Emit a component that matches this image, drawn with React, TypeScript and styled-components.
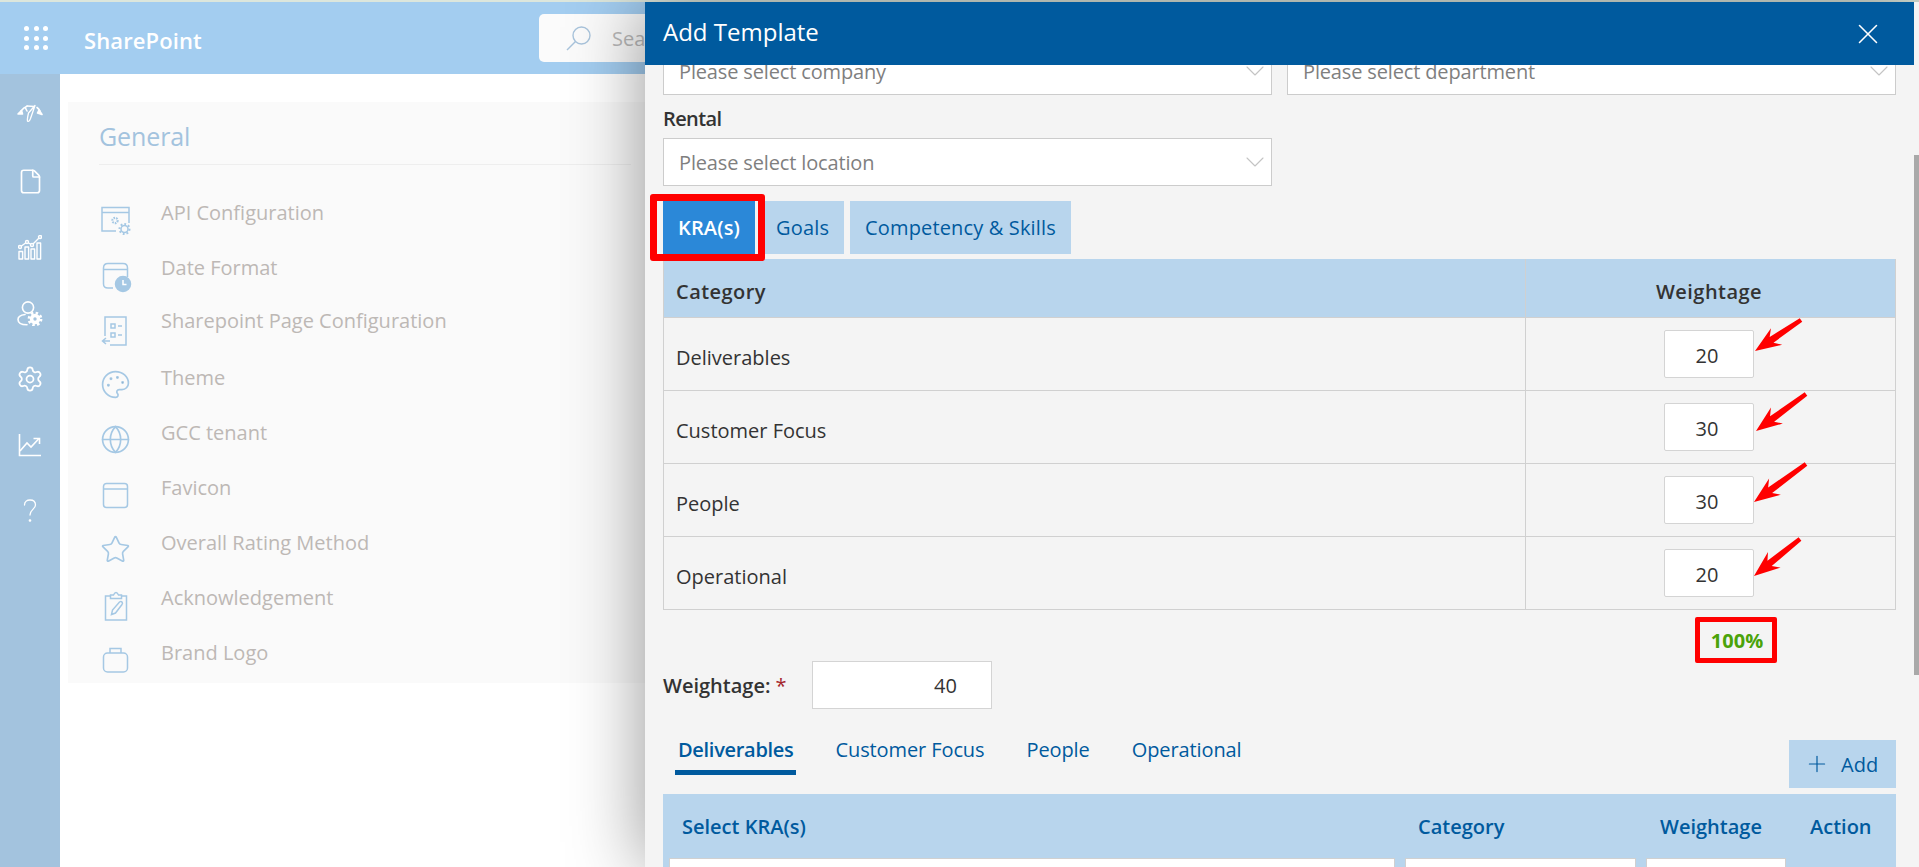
import React from "react";
import styled, { createGlobalStyle } from "styled-components";
import { ChevronDown, File, Globe, Palette, Plus, Settings, Star, X } from "lucide-react";

const Global = createGlobalStyle`
  html, body { margin: 0; padding: 0; background: #fff; }
  * { box-sizing: border-box; }
  body { font-family: "Open Sans", "Liberation Sans", sans-serif; overflow: hidden; }
`;

const Page = styled.div`
  position: relative;
  width: 1919px;
  height: 867px;
  overflow: hidden;
  display: flex;
  flex-direction: column;
  background: #fff;
`;
const TopStrip = styled.div`
  height: 2px;
  flex: none;
  background: #dce6dc;
`;
const Header = styled.header`
  height: 72px;
  flex: none;
  background: #a3cdf0;
  display: flex;
  align-items: center;
`;
const Waffle = styled.div`
  width: 24px;
  margin-left: 24px;
  display: grid;
  grid-template-columns: repeat(3, 5px);
  grid-auto-rows: 5px;
  gap: 4.5px;
  span { background: #fff; border-radius: 50%; }
`;
const Brand = styled.div`
  margin-left: 36px;
  width: 455px;
  color: #fff;
  font-size: 22px;
  font-weight: 600;
  letter-spacing: 0.1px;
  margin-top: 4px;
`;
const SearchBox = styled.div`
  width: 300px;
  height: 48px;
  background: #fbfbfb;
  border-radius: 5px;
  display: flex;
  align-items: center;
  padding-left: 27px;
  gap: 21px;
  color: #b9b9b9;
  font-size: 20px;
`;
const Main = styled.div`
  flex: 1;
  display: flex;
  min-height: 0;
`;
const Rail = styled.nav`
  width: 60px;
  flex: none;
  background: #a3c3de;
  padding-top: 8px;
  display: flex;
  flex-direction: column;
  align-items: center;
`;
const RailItem = styled.div<{ $lift?: number }>`
  height: 66px;
  display: flex;
  align-items: center;
  justify-content: center;
  padding-bottom: ${(p) => p.$lift ?? 0}px;
`;
const Content = styled.div`
  flex: 1;
  padding: 28px 0 0 8px;
`;
const Card = styled.section`
  width: 640px;
  height: 581px;
  background: #fafafa;
  padding: 19px 0 0 31px;
`;
const CardTitle = styled.h2`
  margin: 0;
  font-size: 25px;
  line-height: 30px;
  font-weight: 400;
  letter-spacing: -0.1px;
  color: #a3c3de;
  height: 44px;
  width: 532px;
  border-bottom: 1px solid #eeeeee;
`;
const SettingList = styled.div`
  margin-top: 36px;
  margin-left: 2px;
`;
const SettingRow = styled.div<{ $h: number }>`
  height: ${(p) => p.$h}px;
  display: flex;
  align-items: flex-start;
`;
const SettingIcon = styled.svg`
  width: 30px;
  height: 34px;
  flex: none;
  margin-top: 4px;
  fill: none;
  stroke: #a5c8e4;
  stroke-width: 1.5;
  overflow: visible;
`;
const SettingLabel = styled.span`
  margin-left: 30px;
  font-size: 20px;
  line-height: 24px;
  color: #bdb8b5;
`;
const Panel = styled.aside`
  position: absolute;
  top: 2px;
  right: 0;
  bottom: 0;
  width: 1274px;
  display: flex;
  background: #f4f4f4;
  box-shadow: 0 0 70px rgba(0, 0, 0, 0.42);
`;
const PanelColumn = styled.div`
  width: 1269px;
  display: flex;
  flex-direction: column;
  min-height: 0;
`;
const PanelHeader = styled.div`
  height: 63px;
  flex: none;
  position: relative;
  z-index: 1;
  background: #005a9e;
  color: #fff;
  display: flex;
  align-items: center;
  justify-content: space-between;
  padding: 0 29px 4px 18px;
  font-size: 24px;
  svg { margin-top: 4px; }
`;
const PanelBody = styled.div`
  flex: 1;
  min-height: 0;
  overflow: hidden;
  padding: 0 18px;
`;
const ScrollTrack = styled.div`
  width: 5px;
  flex: none;
  padding-top: 153px;
`;
const ScrollThumb = styled.div`
  height: 520px;
  background: #a9a9a9;
`;
const SelectGrid = styled.div`
  margin-top: -18px;
  display: grid;
  grid-template-columns: 609px 609px;
  gap: 15px;
`;
const SelectBox = styled.div`
  height: 48px;
  width: 609px;
  background: #fff;
  border: 1px solid #cccccc;
  display: flex;
  align-items: center;
  justify-content: space-between;
  padding: 0 0 0 15px;
  font-size: 20px;
  letter-spacing: -0.15px;
  color: #7f7f7f;
  svg { color: #c4c4c4; }
`;
const FieldLabel = styled.div`
  height: 43px;
  padding-top: 11px;
  font-size: 20px;
  line-height: 26px;
  font-weight: 600;
  color: #333;
  letter-spacing: -0.6px;
`;
const TabRow = styled.div`
  display: flex;
  gap: 6px;
  margin-top: 15px;
`;
const Tab = styled.div<{ $active?: boolean }>`
  position: relative;
  height: 53px;
  padding: 0 15px;
  display: flex;
  align-items: center;
  background: ${(p) => (p.$active ? "#2b88d8" : "#b8d5ed")};
  color: ${(p) => (p.$active ? "#fff" : "#005a9e")};
  font-weight: ${(p) => (p.$active ? 600 : 400)};
  font-size: 20px;
  letter-spacing: 0.15px;
`;
const RedBox = styled.div`
  position: absolute;
  z-index: 2;
  border: 7px solid #ff0000;
  border-radius: 3px;
  left: -13px;
  top: -7px;
  width: 115px;
  height: 67px;
`;
const WeightTable = styled.div`
  margin-top: 5px;
  border: 1px solid #d0d0d0;
  border-top: 0;
  width: 1233px;
`;
const WeightRow = styled.div<{ $head?: boolean }>`
  height: ${(p) => (p.$head ? 59 : 73)}px;
  display: flex;
  background: ${(p) => (p.$head ? "#b8d5ed" : "transparent")};
  border-bottom: 1px solid #d0d0d0;
  &:last-child { border-bottom: 0; height: 72px; }
  color: #333;
  font-size: 20px;
  font-weight: ${(p) => (p.$head ? 600 : 400)};
  letter-spacing: ${(p) => (p.$head ? "0.45px" : "0")};
`;
const CategoryCell = styled.div`
  width: 862px;
  flex: none;
  padding: 6px 0 0 12px;
  display: flex;
  align-items: center;
  border-right: 1px solid #d0d0d0;
`;
const WeightCell = styled.div<{ $head?: boolean }>`
  position: relative;
  flex: 1;
  display: flex;
  align-items: center;
  justify-content: center;
  padding: ${(p) => (p.$head ? "6px 3px 0 0" : "0 3px 0 0")};
`;
const NumberBox = styled.div`
  width: 90px;
  height: 48px;
  padding: 2px 4px 0 0;
  background: #fff;
  border: 1px solid #d4d4d4;
  border-radius: 2px;
  display: flex;
  align-items: center;
  justify-content: center;
  font-size: 20px;
`;
const ArrowMark = styled.svg`
  position: absolute;
  left: 0;
  top: 0;
  width: 100%;
  height: 100%;
  overflow: visible;
  pointer-events: none;
`;
const TotalBox = styled.div`
  margin: 7px 0 0 1032px;
  width: 82px;
  height: 46px;
  border: 5px solid #ff0000;
  border-radius: 2px;
  display: flex;
  align-items: center;
  justify-content: center;
  padding-left: 2px;
  color: #4aa30a;
  font-size: 20px;
  font-weight: 700;
  letter-spacing: 0.1px;
`;
const WeightField = styled.div`
  margin-top: -2px;
  display: flex;
  align-items: center;
  height: 48px;
`;
const WeightLabel = styled.div`
  width: 149px;
  font-size: 20px;
  font-weight: 600;
  color: #333;
  b { font-weight: 400; color: #a4262c; margin-left: 5px; }
`;
const WeightInput = styled.div`
  width: 180px;
  height: 48px;
  background: #fff;
  border: 1px solid #d4d4d4;
  font-size: 20px;
  color: #333;
  display: flex;
  align-items: center;
  padding-left: 121px;
`;
const SubBar = styled.div`
  margin-top: 31px;
  width: 1233px;
  display: flex;
  justify-content: space-between;
  padding-left: 12px;
`;
const SubTabs = styled.div`
  display: flex;
  gap: 36px;
  height: 35px;
`;
const SubTab = styled.div<{ $active?: boolean }>`
  padding: 0 3px 10px;
  height: 35px;
  line-height: 20px;
  font-size: 20px;
  color: #005a9e;
  font-weight: ${(p) => (p.$active ? 600 : 400)};
  letter-spacing: ${(p) => (p.$active ? "-0.3px" : "-0.1px")};
  border-bottom: 5px solid ${(p) => (p.$active ? "#005a9e" : "transparent")};
`;
const AddButton = styled.div`
  width: 107px;
  height: 48px;
  background: #b8d5ed;
  color: #005a9e;
  display: flex;
  align-items: center;
  padding-left: 15px;
  gap: 11px;
  font-size: 20px;
`;
const KraTable = styled.div`
  margin-top: 6px;
  width: 1233px;
  height: 80px;
  background: #b8d5ed;
  padding-left: 6px;
  display: grid;
  grid-template-columns: 726px 231px 140px 1fr;
  grid-template-rows: 64px 1fr;
  column-gap: 10px;
`;
const KraHead = styled.div<{ $pad: number }>`
  padding-left: ${(p) => p.$pad}px;
  display: flex;
  align-items: center;
  color: #005a9e;
  font-size: 20px;
  font-weight: 600;
`;
const KraCell = styled.div`
  background: #fff;
  border: 1px solid #d0d0d0;
`;
const LucideSlot = styled.div`
  width: 30px;
  height: 34px;
  flex: none;
  margin-top: 3px;
  margin-left: -1px;
  margin-right: 1px;
`;

const railStroke = { fill: "none", stroke: "#fff", strokeWidth: 1.6, strokeLinecap: "round", strokeLinejoin: "round" } as const;

const Gauge = () => (
  <svg width="26" height="20" viewBox="0 0 26 20" {...railStroke}>
    <path d="M4 8 Q6.5 4.5 10 3.2" />
    <path d="M10 3 L17 3.5" strokeWidth={1.4} />
    <path d="M20 4.5 Q22 6 23 8" />
    <path d="M1 11 L4.5 7.5 L5.5 11 Z" fill="#fff" />
    <path d="M22 7 L25 11.5 L20.5 10 Z" fill="#fff" />
    <path d="M18 2.5 L13.5 15.5 Q12 19.5 10.5 18 Q10 16.5 11.5 10 Z" fill="#a3c3de" strokeWidth={1.3} />
    <path d="M8.5 5 L10 8" />
  </svg>
);
const BarsLine = () => (
  <svg width="24" height="25" viewBox="0 0 24 25" {...railStroke} strokeWidth={1.4}>
    <path d="M2 12 L9 7 L14 10 L22 2" />
    <circle cx="2" cy="12" r="1.5" fill="#a3c3de" />
    <circle cx="9" cy="7" r="1.5" fill="#a3c3de" />
    <circle cx="14" cy="10" r="1.5" fill="#a3c3de" />
    <circle cx="22" cy="2" r="1.5" fill="#a3c3de" />
    <rect x="1" y="16.5" width="3.6" height="7.5" />
    <rect x="7" y="12" width="3.6" height="12" />
    <rect x="13" y="14" width="3.6" height="10" />
    <rect x="19" y="8" width="3.6" height="16" />
  </svg>
);
const UserGear = () => (
  <svg width="26" height="25" viewBox="0 0 26 25" {...railStroke}>
    <circle cx="11" cy="6.5" r="5.6" />
    <path d="M8 13.5 C3.5 14 1 15.5 1 18.5 C1 22 4 23.8 10 23.8" />
    <circle cx="18" cy="18" r="6" strokeWidth={2.8} strokeLinecap="butt" strokeDasharray="2.4 2.3" />
    <circle cx="18" cy="18" r="5.2" fill="#fff" stroke="none" />
    <circle cx="18" cy="18" r="1.7" fill="#a3c3de" stroke="none" />
  </svg>
);
const LineChart = () => (
  <svg width="24" height="24" viewBox="0 0 24 24" {...railStroke} strokeLinecap="butt" strokeLinejoin="miter">
    <path d="M1.5 1 V22.5 H23" />
    <path d="M2 18 L9 10 L13 14 L21 5.5" />
    <path d="M15.5 5.5 H21.5 V11" />
  </svg>
);
const Question = () => (
  <svg width="14" height="24" viewBox="0 0 14 24" {...railStroke} strokeWidth={1.3}>
    <path d="M1.5 6 C1.5 2.5 4 1 7 1 C10.5 1 12.5 3 12.5 6 C12.5 10 7 10.5 7 16" />
    <circle cx="7" cy="21.5" r="0.7" fill="#fff" />
  </svg>
);

const icons: Record<string, React.ReactNode> = {
  api: (
    <>
      <path d="M15 26 H1 V2.5 H28 V18" />
      <path d="M1 7.5 H28" />
      <circle cx="14" cy="15.5" r="2.6" strokeDasharray="1.6 1" strokeWidth="2.2" />
      <circle cx="23.5" cy="24" r="3.5" />
      <circle cx="23.5" cy="24" r="5" strokeDasharray="1.8 2" strokeWidth="2" />
    </>
  ),
  date: (
    <>
      <path d="M12 28 H7 Q2.5 28 2.5 24 V8 Q2.5 3.5 7 3.5 H22 Q26.5 3.5 26.5 8 V17" />
      <path d="M2.5 9.5 H26.5" />
      <circle cx="22" cy="24" r="7.5" fill="#a5c8e4" />
      <path d="M22 20 V24.5 H25.5" stroke="#fff" />
    </>
  ),
  page: (
    <>
      <path d="M4 23 V4 H25 V32 H9" />
      <rect x="10" y="11" width="4" height="4" />
      <rect x="10" y="20" width="4" height="4" />
      <path d="M17 13 H21 M17 22 H21" />
      <path d="M9 28 H2 M5 25 L1.5 28 L5 31" />
    </>
  ),
  brand: (
    <>
      <rect x="2.5" y="8" width="24" height="19" rx="4" />
      <path d="M9 8 V3.5 H20 V8" />
    </>
  ),
  favicon: (
    <>
      <rect x="2.5" y="3.5" width="24" height="24" rx="3" />
      <path d="M2.5 9 H26.5" />
    </>
  ),
  ack: (
    <>
      <path d="M9 6 H4.5 V30 H25.5 V6 H21" />
      <path d="M9.5 8.5 V5 H12.5 Q15 0 17.5 5 H20.5 V8.5 Z" />
      <path d="M10.5 24.5 L11.5 20 L18.5 12 Q20 11 21 12 Q22 13.5 21 14.5 L14.5 23 Z" />
    </>
  ),
};

type Item = { label: string; h: number; icon?: string; lucide?: React.ReactNode };
const items: Item[] = [
  { label: "API Configuration", h: 55, icon: "api" },
  { label: "Date Format", h: 53, icon: "date" },
  { label: "Sharepoint Page Configuration", h: 57, icon: "page" },
  { label: "Theme", h: 55, lucide: <Palette size={31} strokeWidth={1.3} color="#a5c8e4" /> },
  { label: "GCC tenant", h: 55, lucide: <Globe size={31} strokeWidth={1.3} color="#a5c8e4" /> },
  { label: "Favicon", h: 55, icon: "favicon" },
  { label: "Overall Rating Method", h: 55, lucide: <Star size={31} strokeWidth={1.3} color="#a5c8e4" /> },
  { label: "Acknowledgement", h: 55, icon: "ack" },
  { label: "Brand Logo", h: 55, icon: "brand" },
];

function arrowPoints(tip: [number, number], tail: [number, number]) {
  const dx = tail[0] - tip[0];
  const dy = tail[1] - tip[1];
  const len = Math.hypot(dx, dy);
  const ux = dx / len;
  const uy = dy / len;
  const nx = -uy;
  const ny = ux;
  const at = (d: number, o: number) => `${tip[0] + ux * d + nx * o},${tip[1] + uy * d + ny * o}`;
  return [at(0, 0), at(26, -10), at(20, -3.4), at(len, -2.2), at(len, 2.2), at(20, 3.4), at(26, 10)].join(" ");
}

const rows = [
  { name: "Deliverables", value: "20", tip: [229, 33] as [number, number], tail: [275, 2] as [number, number] },
  { name: "Customer Focus", value: "30", tip: [230, 40] as [number, number], tail: [280, 3] as [number, number] },
  { name: "People", value: "30", tip: [228, 38] as [number, number], tail: [280, 0] as [number, number] },
  { name: "Operational", value: "20", tip: [228, 39] as [number, number], tail: [274, 2] as [number, number] },
];

export default function App() {
  return (
    <Page>
      <Global />
      <TopStrip />
      <Header>
        <Waffle>
          {Array.from({ length: 9 }, (_, i) => (
            <span key={i} />
          ))}
        </Waffle>
        <Brand>SharePoint</Brand>
        <SearchBox>
          <svg width="25" height="25" viewBox="0 0 25 25" fill="none" stroke="#a9c4dc" strokeWidth="1.4">
            <circle cx="15.5" cy="9.5" r="8.5" />
            <path d="M9.5 15.5 L1 24" />
          </svg>
          Sea
        </SearchBox>
      </Header>
      <Main>
        <Rail>
          <RailItem $lift={4}><Gauge /></RailItem>
          <RailItem><File size={27} strokeWidth={1.5} color="#fff" /></RailItem>
          <RailItem><BarsLine /></RailItem>
          <RailItem><UserGear /></RailItem>
          <RailItem><Settings size={28} strokeWidth={1.5} color="#fff" /></RailItem>
          <RailItem><LineChart /></RailItem>
          <RailItem><Question /></RailItem>
        </Rail>
        <Content>
          <Card>
            <CardTitle>General</CardTitle>
            <SettingList>
              {items.map((it) => (
                <SettingRow key={it.label} $h={it.h}>
                  {it.lucide ? (
                    <LucideSlot>{it.lucide}</LucideSlot>
                  ) : (
                    <SettingIcon viewBox="0 0 30 34">{icons[it.icon as string]}</SettingIcon>
                  )}
                  <SettingLabel>{it.label}</SettingLabel>
                </SettingRow>
              ))}
            </SettingList>
          </Card>
        </Content>
      </Main>
      <Panel>
        <PanelColumn>
          <PanelHeader>
            Add Template
            <X size={34} strokeWidth={1.1} />
          </PanelHeader>
          <PanelBody>
            <SelectGrid>
              <SelectBox>
                Please select company
                <ChevronDown size={32} strokeWidth={0.8} />
              </SelectBox>
              <SelectBox>
                Please select department
                <ChevronDown size={32} strokeWidth={0.8} />
              </SelectBox>
            </SelectGrid>
            <FieldLabel>Rental</FieldLabel>
            <SelectBox>
              Please select location
              <ChevronDown size={32} strokeWidth={0.8} />
            </SelectBox>
            <TabRow>
              <Tab $active>
                KRA(s)
                <RedBox />
              </Tab>
              <Tab>Goals</Tab>
              <Tab>Competency &amp; Skills</Tab>
            </TabRow>
            <WeightTable>
              <WeightRow $head>
                <CategoryCell>Category</CategoryCell>
                <WeightCell $head>Weightage</WeightCell>
              </WeightRow>
              {rows.map((r) => (
                <WeightRow key={r.name}>
                  <CategoryCell>{r.name}</CategoryCell>
                  <WeightCell>
                    <NumberBox>{r.value}</NumberBox>
                    <ArrowMark>
                      <polygon points={arrowPoints(r.tip, r.tail)} fill="#ff0000" />
                    </ArrowMark>
                  </WeightCell>
                </WeightRow>
              ))}
            </WeightTable>
            <TotalBox>100%</TotalBox>
            <WeightField>
              <WeightLabel>
                Weightage:<b>*</b>
              </WeightLabel>
              <WeightInput>40</WeightInput>
            </WeightField>
            <SubBar>
              <SubTabs>
                <SubTab $active>Deliverables</SubTab>
                <SubTab>Customer Focus</SubTab>
                <SubTab>People</SubTab>
                <SubTab>Operational</SubTab>
              </SubTabs>
              <AddButton>
                <Plus size={26} strokeWidth={1.1} />
                Add
              </AddButton>
            </SubBar>
            <KraTable>
              <KraHead $pad={13}>Select KRA(s)</KraHead>
              <KraHead $pad={13}>Category</KraHead>
              <KraHead $pad={14}>Weightage</KraHead>
              <KraHead $pad={14}>Action</KraHead>
              <KraCell />
              <KraCell />
              <KraCell />
            </KraTable>
          </PanelBody>
        </PanelColumn>
        <ScrollTrack>
          <ScrollThumb />
        </ScrollTrack>
      </Panel>
    </Page>
  );
}
